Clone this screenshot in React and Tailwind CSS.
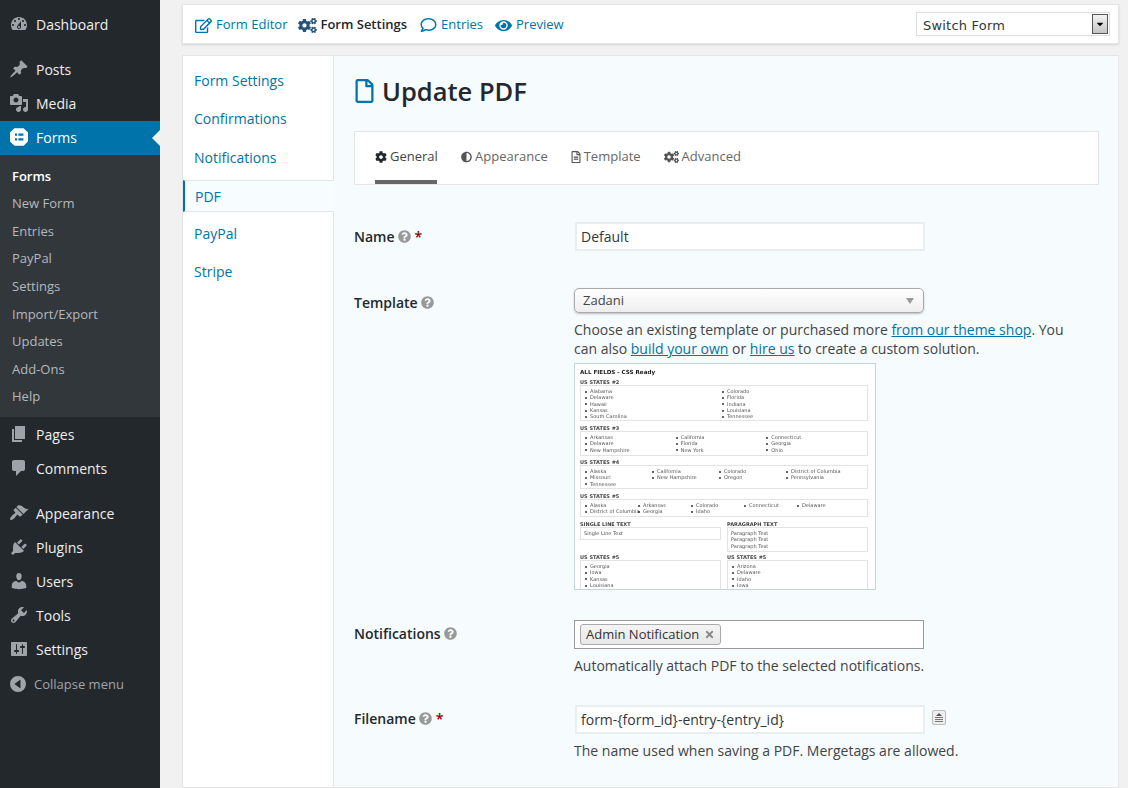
import { FaRegEdit, FaCogs, FaRegComment, FaEye, FaRegFile, FaCog, FaAdjust, FaRegFileAlt, FaQuestionCircle, FaTimes, FaCaretDown } from 'react-icons/fa';

const dash = {
  dashboard: 'M3.76 16h12.48c1.1-1.37 1.76-3.11 1.76-5 0-4.42-3.58-8-8-8s-8 3.58-8 8c0 1.89.66 3.63 1.76 5zM10 4c.55 0 1 .45 1 1s-.45 1-1 1-1-.45-1-1 .45-1 1-1zM6 6c.55 0 1 .45 1 1s-.45 1-1 1-1-.45-1-1 .45-1 1-1zm8 0c.55 0 1 .45 1 1s-.45 1-1 1-1-.45-1-1 .45-1 1-1zm-5.37 5.55L12 7v6c0 1.1-.9 2-2 2s-2-.9-2-2c0-.57.24-1.08.63-1.45zM4 10c.55 0 1 .45 1 1s-.45 1-1 1-1-.45-1-1 .45-1 1-1zm12 0c.55 0 1 .45 1 1s-.45 1-1 1-1-.45-1-1 .45-1 1-1zm-5 3c0-.55-.45-1-1-1s-1 .45-1 1 .45 1 1 1 1-.45 1-1z',
  post: 'M10.44 3.02l1.82-1.82 6.36 6.35-1.83 1.82c-1.05-.68-2.48-.57-3.41.36l-.75.75c-.92.93-1.04 2.35-.35 3.41l-1.83 1.82-2.41-2.41-2.8 2.79c-.42.42-3.38 2.71-3.8 2.29s1.86-3.39 2.28-3.81l2.79-2.79L4.1 9.36l1.83-1.82c1.05.69 2.48.57 3.4-.36l.75-.75c.93-.92 1.05-2.35.36-3.41z',
  media: 'M13 11V4c0-.55-.45-1-1-1h-1.67L9 1H5L3.67 3H2c-.55 0-1 .45-1 1v7c0 .55.45 1 1 1h10c.55 0 1-.45 1-1zM7 4.5c1.38 0 2.5 1.12 2.5 2.5S8.38 9.5 7 9.5 4.5 8.38 4.5 7 5.62 4.5 7 4.5zM14 6h5v10.5c0 1.38-1.12 2.5-2.5 2.5S14 17.88 14 16.5s1.12-2.5 2.5-2.5c.17 0 .34.02.5.05V9h-3V6zm-4 8.05V13h2v3.5c0 1.38-1.12 2.5-2.5 2.5S7 17.88 7 16.5 8.12 14 9.5 14c.17 0 .34.02.5.05z',
  page: 'M6 15V2h10v13H6zm-1 1h8v2H3V5h2v11z',
  comments: 'M5 2h9c1.1 0 2 .9 2 2v7c0 1.1-.9 2-2 2h-2l-5 5v-5H5c-1.1 0-2-.9-2-2V4c0-1.1.9-2 2-2z',
  appearance: 'M14.48 11.06L7.41 3.99l1.5-1.5c.5-.56 2.3-.47 3.51.32 1.21.8 1.43 1.28 2.91 2.1 1.18.64 2.45 1.26 4.45.85zm-.71.71L6.7 4.7 4.93 6.47c-.39.39-.39 1.02 0 1.41l1.06 1.06c.39.39.39 1.03 0 1.42-.6.6-1.43 1.11-2.21 1.69-.35.26-.7.53-1.01.84-1.34 1.34-1.86 2.64-1.62 4.11 1.52.25 2.77-.27 4.1-1.63.31-.31.59-.66.85-1.01.58-.79 1.09-1.6 1.69-2.21.39-.39 1.02-.39 1.41 0l1.06 1.06c.39.39 1.02.39 1.41 0z',
  plugins: 'M13.11 4.36L9.87 7.6 8 5.73l3.24-3.24c.35-.34 1.05-.2 1.56.32.52.51.66 1.21.31 1.55zm-8 1.77l.91-1.12 9.01 9.01-1.19.84c-.71.71-2.63 1.16-3.82 1.16H6.14L4.9 17.26c-.59.59-1.54.59-2.12 0-.59-.58-.59-1.53 0-2.12l1.24-1.24v-3.88c0-1.13.4-3.19 1.09-3.89zm7.26 3.97l3.24-3.24c.34-.35 1.04-.21 1.55.31.52.51.66 1.21.31 1.55l-3.24 3.25z',
  users: 'M10 9.25c-2.27 0-2.73-3.44-2.73-3.44C7 4.02 7.82 2 9.97 2c2.16 0 2.98 2.02 2.71 3.81 0 0-.41 3.44-2.68 3.44zm0 2.57L12.72 10c2.39 0 4.52 2.33 4.52 4.53v2.49s-3.65 1.13-7.24 1.13c-3.65 0-7.24-1.13-7.24-1.13v-2.49c0-2.25 1.94-4.48 4.47-4.48z',
  tools: 'M16.68 9.77c-1.34 1.34-3.3 1.67-4.95.99l-5.41 6.52c-.99.99-2.59.99-3.58 0s-.99-2.59 0-3.57l6.52-5.42c-.68-1.65-.35-3.61.99-4.95 1.28-1.28 3.12-1.62 4.72-1.06l-2.89 2.89 2.82 2.82 2.86-2.87c.53 1.58.18 3.39-1.08 4.65zM3.81 16.21c.4.39 1.04.39 1.43 0 .4-.4.4-1.04 0-1.43-.39-.4-1.03-.4-1.43 0-.39.39-.39 1.03 0 1.43z',
  settings: 'M18 16V4c0-.55-.45-1-1-1H3c-.55 0-1 .45-1 1v12c0 .55.45 1 1 1h14c.55 0 1-.45 1-1zM8 11h1c.55 0 1 .45 1 1s-.45 1-1 1H8v1.5c0 .28-.22.5-.5.5s-.5-.22-.5-.5V13H6c-.55 0-1-.45-1-1s.45-1 1-1h1V5.5c0-.28.22-.5.5-.5s.5.22.5.5V11zm5-2h-1c-.55 0-1-.45-1-1s.45-1 1-1h1V5.5c0-.28.22-.5.5-.5s.5.22.5.5V7h1c.55 0 1 .45 1 1s-.45 1-1 1h-1v5.5c0 .28-.22.5-.5.5s-.5-.22-.5-.5V9z',
  collapse: 'M10 2a8 8 0 1 0 0 16 8 8 0 0 0 0-16zm2.5 3.6v8.8L6.4 10z',
};

function Dash({ name, className = 'h-5 w-5' }) {
  return (
    <svg viewBox="0 0 20 20" className={className} fill="currentColor" fillRule="evenodd">
      <path d={dash[name]} />
    </svg>
  );
}

function MenuItem({ icon, label, raised }) {
  return (
    <div className={`flex h-[34px] items-center text-[14px] text-[#eeeeee] ${raised ? 'pb-[2px]' : ''}`}>
      <span className="flex w-[36px] justify-center pl-[1px] text-[#9ea3a8]">
        <Dash name={icon} />
      </span>
      {label}
    </div>
  );
}

const subItems = ['New Form', 'Entries', 'PayPal', 'Settings', 'Import/Export', 'Updates', 'Add-Ons', 'Help'];

function Sidebar() {
  return (
    <aside className="h-full w-[160px] shrink-0 bg-[#23282d] pt-[8px]">
      <MenuItem raised icon="dashboard" label="Dashboard" />
      <div className="h-[11px]" />
      <MenuItem raised icon="post" label="Posts" />
      <MenuItem raised icon="media" label="Media" />
      <div className="relative flex h-[34px] items-center bg-[#0073aa] pb-[2px] text-[14px] text-white">
        <span className="flex w-[36px] justify-center pl-[1px]">
          <svg viewBox="0 0 20 20" className="h-5 w-5" fillRule="evenodd">
            <path fill="#fff" d="M5.4 1.2h9.2L19 5.6v8.8l-4.4 4.4H5.4L1 14.4V5.6z M6 6.6v2.2h2V6.6z M9.4 6.6v2.2h5V6.6z M6 11.2v2.2h2v-2.2z M9.4 11.2v2.2h5v-2.2z" />
          </svg>
        </span>
        Forms
        <span className="absolute right-0 top-[9px] h-0 w-0 border-y-[8px] border-r-[8px] border-y-transparent border-r-[#f1f1f1]" />
      </div>
      <div className="bg-[#32373c] pb-[6.5px] pt-[7.5px] text-[13px] text-[#b4b9be]">
        <div className="flex h-[27.6px] items-center pl-[12px] font-semibold text-white">Forms</div>
        {subItems.map((item) => (
          <div key={item} className="flex h-[27.6px] items-center pl-[12px]">{item}</div>
        ))}
      </div>
      <MenuItem icon="page" label="Pages" />
      <MenuItem icon="comments" label="Comments" />
      <div className="h-[11px]" />
      <MenuItem icon="appearance" label="Appearance" />
      <MenuItem icon="plugins" label="Plugins" />
      <MenuItem icon="users" label="Users" />
      <MenuItem icon="tools" label="Tools" />
      <MenuItem icon="settings" label="Settings" />
      <div className="flex h-[34px] items-center pt-[2px] text-[13px] text-[#a0a5aa]">
        <span className="flex w-[34px] justify-center pl-[1px] text-[#a0a5aa]">
          <Dash name="collapse" />
        </span>
        Collapse menu
      </div>
    </aside>
  );
}

function TopLink({ icon, label, active, className }) {
  return (
    <span className={`flex items-center gap-[4px] ${active ? 'font-semibold text-[#23282d]' : 'text-[#0073aa]'} ${className}`}>
      <span className="flex w-[17px] justify-center text-[#0073aa]">{icon}</span>
      {label}
    </span>
  );
}

function TopBar() {
  return (
    <div className="flex h-[40px] items-center border border-[#e5e5e5] bg-white pl-[12px] pr-[8px] pt-[2px] text-[13px] shadow-[0_1px_2px_rgba(0,0,0,0.12)]">
      <TopLink icon={<FaRegEdit className="h-[17px] w-[17px] shrink-0" />} label="Form Editor" className="mr-[12px]" />
      <TopLink active icon={<FaCogs className="h-[15px] w-[19px] shrink-0 text-[#23527c]" />} label="Form Settings" className="mr-[13px]" />
      <TopLink icon={<FaRegComment className="h-[16px] w-[17px] shrink-0" />} label="Entries" className="mr-[12px]" />
      <TopLink icon={<FaEye className="h-[15px] w-[17px] shrink-0" />} label="Preview" />
      <div className="-mt-[2px] ml-auto flex h-[24px] w-[194px] items-center border border-[#dddddd] bg-white pl-[6px] pr-[1px] pt-[3px] font-['DejaVu_Sans',sans-serif] text-[13px] tracking-[0.2px] text-[#32373c]">
        Switch Form
        <span className="-mt-[3px] ml-auto flex h-[20px] w-[16px] items-center justify-center border border-[#555555] bg-gradient-to-b from-[#f4f4f4] to-[#c4c4c4] text-black">
          <FaCaretDown className="h-[10px] w-[10px]" />
        </span>
      </div>
    </div>
  );
}

function SideNav() {
  const navLink = 'flex h-[38.3px] items-center pl-[11px] text-[14px] text-[#0073aa]';
  return (
    <nav className="w-[151px] shrink-0 border-r border-[#e5e5e5] bg-white pt-[5px]">
      <div className={navLink}>Form Settings</div>
      <div className={navLink}>Confirmations</div>
      <div className={`${navLink} pt-[2px]`}>Notifications</div>
      <div className="flex h-[38.3px] items-center pt-[2px]">
        <div className="-mr-[1px] flex h-[32px] w-[151px] items-center border-y border-l-2 border-y-[#e5e5e5] border-l-[#0073aa] bg-[#f7fcfe] pl-[10px] text-[14px] text-[#0073aa]">PDF</div>
      </div>
      <div className={navLink}>PayPal</div>
      <div className={navLink}>Stripe</div>
    </nav>
  );
}

function Tab({ icon, label, active, className }) {
  return (
    <div className={`flex h-[53px] flex-col ${className}`}>
      <div className={`flex flex-1 items-center gap-[3px] pt-[2px] text-[13px] ${active ? 'text-[#444444]' : 'text-[#666666]'}`}>
        <span className={active ? 'text-[#23282d]' : 'text-[#555555]'}>{icon}</span>
        {label}
      </div>
      <div className={`mb-[1px] h-[4px] ${active ? 'bg-[#666666]' : ''}`} />
    </div>
  );
}

function Help() {
  return <FaQuestionCircle className="h-[13px] w-[13px] text-[#999999]" />;
}

function Label({ text, required, className }) {
  return (
    <div className={`flex w-[220px] shrink-0 items-center gap-[3px] text-[14px] font-semibold text-[#23282d] ${className}`}>
      {text}
      <Help />
      {required && <span className="ml-[1px] text-[#8b0000]">*</span>}
    </div>
  );
}

// the template thumbnail is a very small copy of the sample PDF page
function Bullets({ cols, items, className }) {
  return (
    <div className={`grid content-start border border-[#e3e3e3] pl-[4px] pt-[2px] ${className}`} style={{ gridTemplateColumns: `repeat(${cols}, minmax(0, 1fr))` }}>
      {items.map((item, i) => (
        <div key={i} className="whitespace-nowrap leading-[6.3px] before:mr-[3px] before:inline-block before:h-[2px] before:w-[2px] before:rounded-full before:bg-[#333333] before:align-middle">
          {item}
        </div>
      ))}
    </div>
  );
}

function Thumb() {
  const head = 'h-[6px] font-bold leading-[6px] text-[#444444]';
  return (
    <div className="mt-[5px] h-[227px] w-[302px] overflow-hidden border border-[#c6d5dc] bg-white pl-[5px] pr-[7px] pt-[5px] font-['DejaVu_Sans',sans-serif] text-[5px] text-[#555555] [filter:blur(0.4px)]">
      <div className="h-[7px] text-[5.6px] font-bold leading-[7px] text-[#222222]">ALL FIELDS - CSS Ready</div>
      <div className={`${head} mt-[3px]`}>US STATES #2</div>
      <Bullets cols={2} className="h-[36px] pr-[8px]" items={['Alabama', 'Colorado', 'Delaware', 'Florida', 'Hawaii', 'Indiana', 'Kansas', 'Louisiana', 'South Carolina', 'Tennessee']} />
      <div className={`${head} mt-[4px]`}>US STATES #3</div>
      <Bullets cols={3} className="h-[25px] pr-[10px]" items={['Arkansas', 'California', 'Connecticut', 'Delaware', 'Florida', 'Georgia', 'New Hampshire', 'New York', 'Ohio']} />
      <div className={`${head} mt-[3px]`}>US STATES #4</div>
      <Bullets cols={4} className="h-[24px] pr-[14px]" items={['Alaska', 'California', 'Colorado', 'District of Columbia', 'Missouri', 'New Hampshire', 'Oregon', 'Pennsylvania', 'Tennessee']} />
      <div className={`${head} mt-[4px]`}>US STATES #5</div>
      <Bullets cols={5} className="h-[18px] pr-[17px]" items={['Alaska', 'Arkansas', 'Colorado', 'Connecticut', 'Delaware', 'District of Columbia', 'Georgia', 'Idaho']} />
      <div className="mt-[4px] grid grid-cols-2 gap-x-[6px]">
        <div>
          <div className={head}>SINGLE LINE TEXT</div>
          <div className="h-[13px] border border-[#e3e3e3] pl-[3px] pt-[2px] leading-[6.4px]">Single Line Text</div>
        </div>
        <div>
          <div className={head}>PARAGRAPH TEXT</div>
          <div className="h-[25px] border border-[#e3e3e3] pl-[3px] pt-[2px] leading-[6.4px]">
            <div>Paragraph Text</div>
            <div>Paragraph Text</div>
            <div>Paragraph Text</div>
          </div>
        </div>
      </div>
      <div className="mt-[2px] grid grid-cols-2 gap-x-[6px]">
        <div>
          <div className={head}>US STATES #5</div>
          <Bullets cols={1} className="h-[30px]" items={['Georgia', 'Iowa', 'Kansas', 'Louisiana']} />
        </div>
        <div>
          <div className={head}>US STATES #5</div>
          <Bullets cols={1} className="h-[30px]" items={['Arizona', 'Delaware', 'Idaho', 'Iowa']} />
        </div>
      </div>
    </div>
  );
}

function Content() {
  const link = 'text-[#0073aa] underline';
  return (
    <main className="min-w-0 flex-1 bg-[#f6fbfe] pl-[20px] pr-[19px] pt-[15px] text-[14px] text-[#444444]">
      <h1 className="flex h-[40px] items-center gap-[8px] pl-[1px] text-[25.5px] font-semibold text-[#23282d]">
        <FaRegFile className="h-[24px] w-[19px] text-[#0073aa]" />
        Update PDF
      </h1>
      <div className="mt-[20px] flex h-[54px] items-start border border-[#e5e5e5] bg-white pl-[20px]">
        <Tab active icon={<FaCog className="h-[12px] w-[12px]" />} label="General" className="mr-[24px] w-[62px]" />
        <Tab icon={<FaAdjust className="h-[12px] w-[11px]" />} label="Appearance" className="mr-[23px]" />
        <Tab icon={<FaRegFileAlt className="h-[12px] w-[10px]" />} label="Template" className="mr-[23px]" />
        <Tab icon={<FaCogs className="h-[12px] w-[15px]" />} label="Advanced" />
      </div>

      <div className="mt-[37px] flex">
        <Label text="Name" required className="h-[28px]" />
        <div className="ml-[1px] flex h-[29px] w-[350px] items-center border-2 border-[#e9eef0] bg-white px-[4px] text-[#32373c]">Default</div>
      </div>

      <div className="mt-[37px] flex">
        <Label text="Template" className="h-[28px]" />
        <div className="w-[500px]">
          <div className="flex h-[25px] w-[350px] items-center justify-between rounded-[5px] border border-[#aaaaaa] bg-gradient-to-b from-white to-[#eeeeee] px-[8px] pt-[1px] text-[13px] text-[#444444] shadow-[0_1px_2px_rgba(0,0,0,0.25)]">
            Zadani
            <span className="mr-[1px] h-0 w-0 border-x-[4px] border-t-[6px] border-x-transparent border-t-[#999999]" />
          </div>
          <p className="mt-[7px] leading-[19px]">
            Choose an existing template or purchased more <span className={link}>from our theme shop</span>. You can also <span className={link}>build your own</span> or <span className={link}>hire us</span> to create a custom solution.
          </p>
          <Thumb />
        </div>
      </div>

      <div className="mt-[30px] flex">
        <Label text="Notifications" className="h-[27px]" />
        <div>
          <div className="flex h-[29px] w-[350px] items-center border border-[#999999] bg-white pl-[5px]">
            <span className="flex h-[21px] items-center gap-[5px] rounded-[3px] border border-[#aaaaaa] bg-gradient-to-b from-[#f4f4f4] to-[#e8e8e8] px-[5px] text-[13px] text-[#333333]">
              Admin Notification
              <FaTimes className="h-[11px] w-[11px] text-[#888888]" />
            </span>
          </div>
          <p className="mt-[7px] leading-[19px]">Automatically attach PDF to the selected notifications.</p>
        </div>
      </div>

      <div className="mt-[30px] flex">
        <Label text="Filename" required className="h-[27px]" />
        <div>
          <div className="flex items-start">
            <div className="ml-[1px] flex h-[29px] w-[350px] items-center border-2 border-[#e9eef0] bg-white px-[4px] text-[#32373c]">form-{'{form_id}'}-entry-{'{entry_id}'}</div>
            <span className="ml-[7px] mt-[5px] flex h-[15px] w-[14px] flex-col items-center gap-[1px] rounded-[2px] border border-[#bbbbbb] bg-[#eeeeee] pt-[2px]">
              <span className="h-0 w-0 border-x-[3px] border-b-[3px] border-x-transparent border-b-[#555555]" />
              <span className="h-[1px] w-[8px] bg-[#777777]" />
              <span className="h-[1px] w-[8px] bg-[#777777]" />
              <span className="h-[1px] w-[8px] bg-[#777777]" />
            </span>
          </div>
          <p className="mt-[7px] leading-[19px]">The name used when saving a PDF. Mergetags are allowed.</p>
        </div>
      </div>
    </main>
  );
}

export default function App() {
  return (
    <div className="flex h-[788px] w-[1128px] overflow-hidden bg-[#f1f1f1] font-['Open_Sans',sans-serif]">
      <Sidebar />
      <div className="flex min-w-0 flex-1 flex-col pl-[22px] pr-[9px] pt-[4px]">
        <TopBar />
        <div className="mt-[11px] flex min-h-0 flex-1 overflow-hidden border border-[#e5e5e5]">
          <SideNav />
          <Content />
        </div>
      </div>
    </div>
  );
}
